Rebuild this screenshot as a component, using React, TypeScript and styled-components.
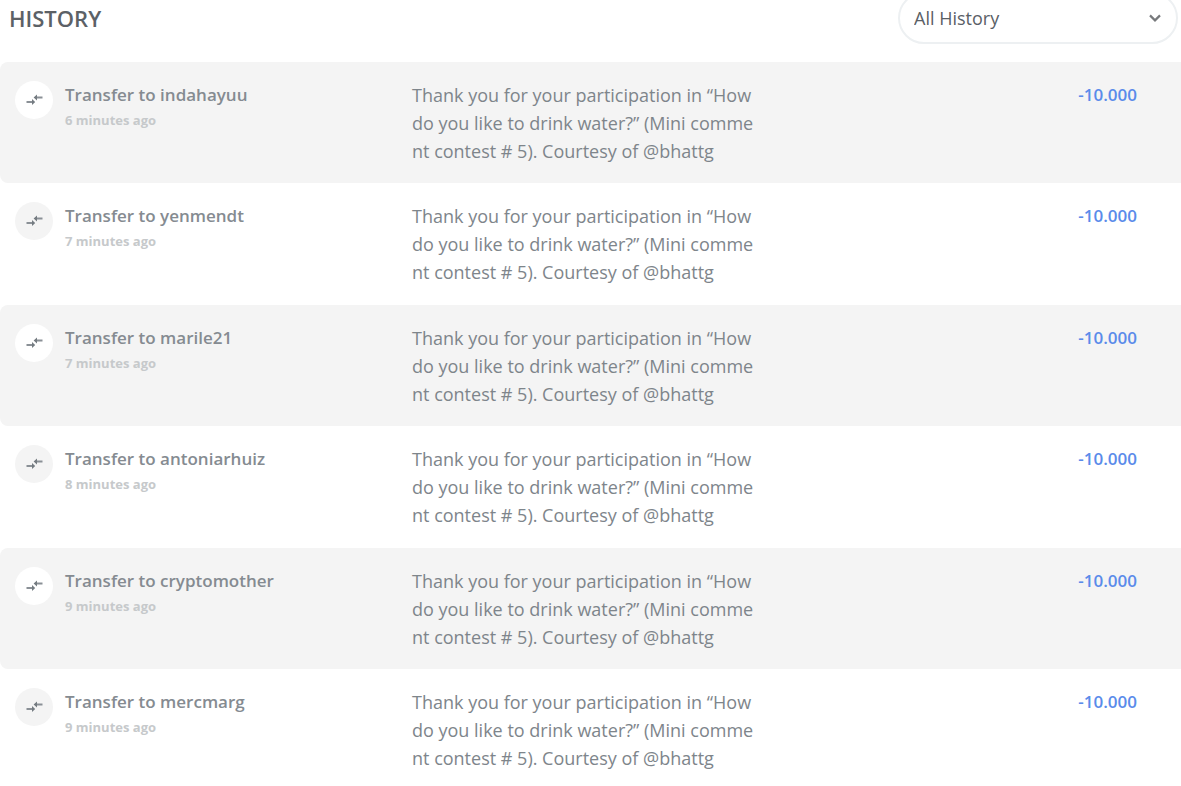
import React from "react";
import styled, { createGlobalStyle } from "styled-components";

const GlobalStyle = createGlobalStyle`
  *, *::before, *::after { box-sizing: border-box; }
  body {
    margin: 0;
    background: #fff;
    color: #7e858b;
    font-family: "Open Sans", "Noto Sans", sans-serif;
    font-size: 18px;
    line-height: 28px;
  }
`;

const Page = styled.main`
  overflow: hidden;
`;

const Toolbar = styled.header`
  display: flex;
  align-items: center;
  justify-content: space-between;
  margin-top: -8px;
  padding: 0 3px 0 9px;
`;

const Heading = styled.h1`
  margin: 0;
  color: #5c6166;
  font-size: 22px;
  font-weight: 600;
  line-height: 28px;
`;

const Filter = styled.label`
  display: grid;
  width: 280px;
  align-items: center;

  > * {
    grid-area: 1 / 1;
  }

  > svg {
    justify-self: end;
    margin-right: 16px;
    pointer-events: none;
  }
`;

const FilterSelect = styled.select`
  appearance: none;
  width: 100%;
  height: 52px;
  padding: 0 40px 0 14px;
  border: 2px solid #edf0f2;
  border-radius: 26px;
  background: #fff;
  color: #5a6066;
  font: inherit;
`;

const HistoryTable = styled.table`
  width: 100%;
  margin-top: 18px;
  border-collapse: separate;
  border-spacing: 0;
  table-layout: fixed;
`;

const PartyColumn = styled.col`
  width: 412px;
`;

const AmountColumn = styled.col`
  width: 180px;
`;

const Cell = styled.td`
  padding: 19px 0 18px;
  vertical-align: top;
`;

const PartyCell = styled(Cell)`
  padding-left: 15px;
  border-radius: 8px 0 0 8px;
`;

const AmountCell = styled(Cell)`
  padding-right: 44px;
  color: #5a8bea;
  font-size: 17px;
  font-weight: 600;
  text-align: right;
`;

const Party = styled.div`
  display: flex;
  gap: 12px;
`;

const Badge = styled.span`
  display: flex;
  flex: none;
  align-items: center;
  justify-content: center;
  width: 38px;
  height: 38px;
  border-radius: 50%;
  background: #f4f4f4;
`;

const Row = styled.tr`
  &:nth-child(odd) > td {
    background: #f4f4f4;
  }

  &:nth-child(even) > td {
    padding-bottom: 19px;
  }

  &:nth-child(odd) ${Badge} {
    background: #fff;
  }
`;

const Title = styled.div`
  color: #858b91;
  font-size: 17px;
  font-weight: 600;
  line-height: 28px;
`;

const Time = styled.div`
  color: #c6c9cb;
  font-size: 13px;
  font-weight: 700;
  line-height: 22px;
`;

const Memo = styled.p`
  margin: 0;
  white-space: pre-line;
`;

const MEMO =
  "Thank you for your participation in “How\ndo you like to drink water?” (Mini comme\nnt contest # 5). Courtesy of @bhattg";

const transfers = [
  { to: "indahayuu", time: "6 minutes ago" },
  { to: "yenmendt", time: "7 minutes ago" },
  { to: "marile21", time: "7 minutes ago" },
  { to: "antoniarhuiz", time: "8 minutes ago" },
  { to: "cryptomother", time: "9 minutes ago" },
  { to: "mercmarg", time: "9 minutes ago" },
];

function TransferIcon() {
  return (
    <svg width="18" height="12" viewBox="0 0 18 12" aria-hidden="true">
      <path d="M17.5 3.5H11M1.5 8H8" stroke="#8a9096" strokeWidth="1.8" fill="none" />
      <path d="M8.6 3.5L12 0.6V6.4ZM10.2 8L7 5.1V10.9Z" fill="#747b81" />
    </svg>
  );
}

function ChevronIcon() {
  return (
    <svg width="14" height="10" viewBox="0 0 14 10" aria-hidden="true">
      <path d="M2 2.4L7 7.4L12 2.4" stroke="#77797c" strokeWidth="2.2" fill="none" />
    </svg>
  );
}

export default function App() {
  return (
    <Page>
      <GlobalStyle />
      <Toolbar>
        <Heading>HISTORY</Heading>
        <Filter>
          <FilterSelect aria-label="Filter history">
            <option>All History</option>
          </FilterSelect>
          <ChevronIcon />
        </Filter>
      </Toolbar>
      <HistoryTable aria-label="History">
        <colgroup>
          <PartyColumn />
          <col />
          <AmountColumn />
        </colgroup>
        <tbody>
          {transfers.map(({ to, time }) => (
            <Row key={to}>
              <PartyCell>
                <Party>
                  <Badge>
                    <TransferIcon />
                  </Badge>
                  <div>
                    <Title>Transfer to {to}</Title>
                    <Time>{time}</Time>
                  </div>
                </Party>
              </PartyCell>
              <Cell>
                <Memo>{MEMO}</Memo>
              </Cell>
              <AmountCell>-10.000</AmountCell>
            </Row>
          ))}
        </tbody>
      </HistoryTable>
    </Page>
  );
}
